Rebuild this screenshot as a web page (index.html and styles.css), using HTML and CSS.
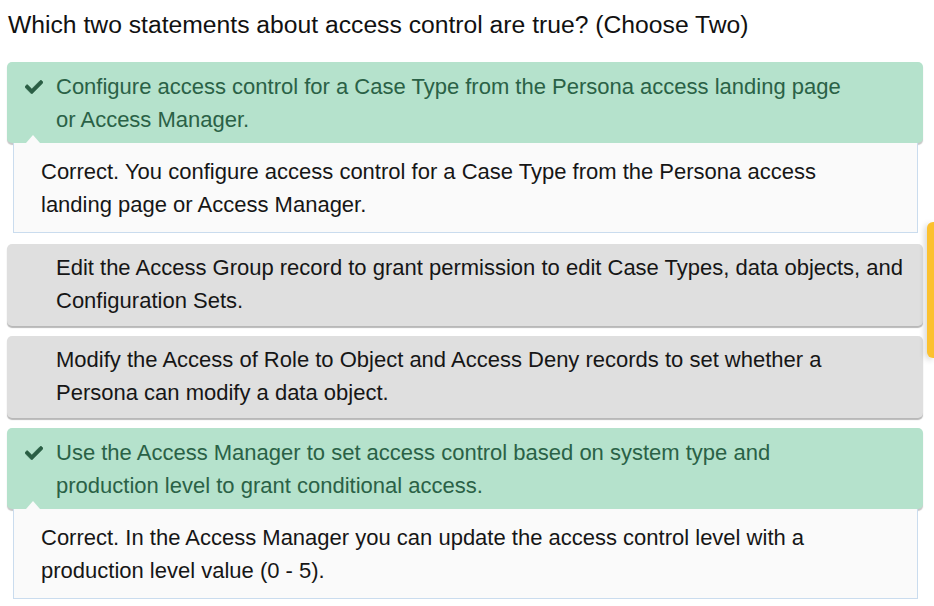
FILE: index.html
```html
<!DOCTYPE html>
<html>
<head>
<meta charset="utf-8">
<link rel="stylesheet" href="styles.css">
</head>
<body>
<div class="quiz">
  <h1 class="question">Which two statements about access control are true? (Choose Two)</h1>

  <div class="option correct">
    <svg class="check" viewBox="0 60 512 392"><path d="M173.898 439.404l-166.4-166.4c-9.997-9.997-9.997-26.206 0-36.204l36.203-36.204c9.997-9.998 26.207-9.998 36.204 0L192 312.69 432.095 72.596c9.997-9.997 26.207-9.997 36.204 0l36.203 36.204c9.997 9.997 9.997 26.206 0 36.204l-294.4 294.401c-9.998 9.997-26.207 9.997-36.204-.001z"/></svg>
    <p class="text">Configure access control for a Case Type from the Persona access landing page<br>or Access Manager.</p>
  </div>
  <div class="feedback">
    <p class="text">Correct. You configure access control for a Case Type from the Persona access<br>landing page or Access Manager.</p>
  </div>

  <div class="option plain">
    <p class="text">Edit the Access Group record to grant permission to edit Case Types, data objects, and<br>Configuration Sets.</p>
  </div>

  <div class="option plain">
    <p class="text">Modify the Access of Role to Object and Access Deny records to set whether a<br>Persona can modify a data object.</p>
  </div>

  <div class="option correct">
    <svg class="check" viewBox="0 60 512 392"><path d="M173.898 439.404l-166.4-166.4c-9.997-9.997-9.997-26.206 0-36.204l36.203-36.204c9.997-9.998 26.207-9.998 36.204 0L192 312.69 432.095 72.596c9.997-9.997 26.207-9.997 36.204 0l36.203 36.204c9.997 9.997 9.997 26.206 0 36.204l-294.4 294.401c-9.998 9.997-26.207 9.997-36.204-.001z"/></svg>
    <p class="text">Use the Access Manager to set access control based on system type and<br>production level to grant conditional access.</p>
  </div>
  <div class="feedback">
    <p class="text">Correct. In the Access Manager you can update the access control level with a<br>production level value (0 - 5).</p>
  </div>
</div>
<div class="side-tab"></div>
</body>
</html>
```

FILE: styles.css
```css
html, body {
  margin: 0;
  padding: 0;
  background: #ffffff;
  font-family: "Liberation Sans", Arial, sans-serif;
  overflow: hidden;
}

.quiz {
  width: 916px;
  padding: 9px 0 0 7px;
  display: flex;
  flex-direction: column;
}

.question {
  margin: 0 0 21px 1px;
  font-size: 24.7px;
  font-weight: normal;
  line-height: 32px;
  color: #111111;
}

.text {
  margin: 0;
  font-size: 22px;
  line-height: 32.5px;
  white-space: nowrap;
}

.option {
  display: flex;
  align-items: flex-start;
  border-radius: 5px;
  padding: 8px 10px 8px 49px;
}

.option.correct {
  background: #b5e2cc;
  color: #2a6146;
  padding-left: 18px;
  padding-top: 9px;
  padding-bottom: 7px;
  box-shadow: 0 2px 1px rgba(0, 0, 0, 0.22);
  position: relative;
  z-index: 1;
}

.option.plain {
  background: #dfdfdf;
  color: #161616;
  box-shadow: 0 2px 1px rgba(0, 0, 0, 0.28);
  margin-top: 11px;
  padding-top: 8px;
  padding-bottom: 9px;
}

.option.plain + .option.plain {
  margin-top: 10px;
}

.option.plain + .option.correct {
  margin-top: 10px;
}

.check {
  width: 18px;
  height: 14px;
  fill: #2a5e44;
  stroke: #2a5e44;
  stroke-width: 18;
  margin: 9px 13px 0 0;
  flex: none;
}

.feedback {
  position: relative;
  z-index: 2;
  margin: 0 5px 0 6px;
  background: #fafafa;
  border: 1px solid #cadcee;
  border-top: none;
  padding: 13px 27px 11px 27px;
  color: #161616;
}

.feedback::before {
  content: "";
  position: absolute;
  top: -8px;
  left: 12px;
  border-left: 7.5px solid transparent;
  border-right: 7.5px solid transparent;
  border-bottom: 8px solid #fafafa;
}

.side-tab {
  position: fixed;
  right: 0;
  top: 222px;
  width: 7px;
  height: 136px;
  background: #fcc12f;
  border-radius: 6px 0 0 6px;
  box-shadow: -2px 2px 6px rgba(0, 0, 0, 0.18);
}
```
